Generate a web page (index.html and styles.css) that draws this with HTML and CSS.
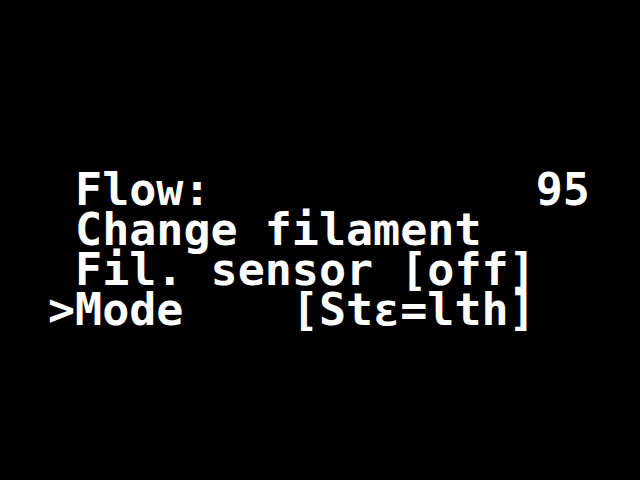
FILE: index.html
```html
<!DOCTYPE html>
<html>
<head>
<meta charset="utf-8">
<link rel="stylesheet" href="styles.css">
</head>
<body>
<div class="lcd">
<div class="row"> Flow:            95</div>
<div class="row"> Change filament</div>
<div class="row"> Fil. sensor [off]</div>
<div class="row">&gt;Mode    [Stε=lth]</div>
</div>
</body>
</html>
```
FILE: styles.css
```css
html, body {
  margin: 0;
  padding: 0;
  background: #000;
  width: 640px;
  height: 480px;
  overflow: hidden;
}
.lcd {
  padding: 170px 0 0 48px;
  color: #fff;
  font-family: "DejaVu Sans Mono", "Liberation Mono", monospace;
  font-weight: bold;
  font-size: 45px;
  line-height: 40px;
}
.row {
  white-space: pre;
  height: 40px;
}
```
